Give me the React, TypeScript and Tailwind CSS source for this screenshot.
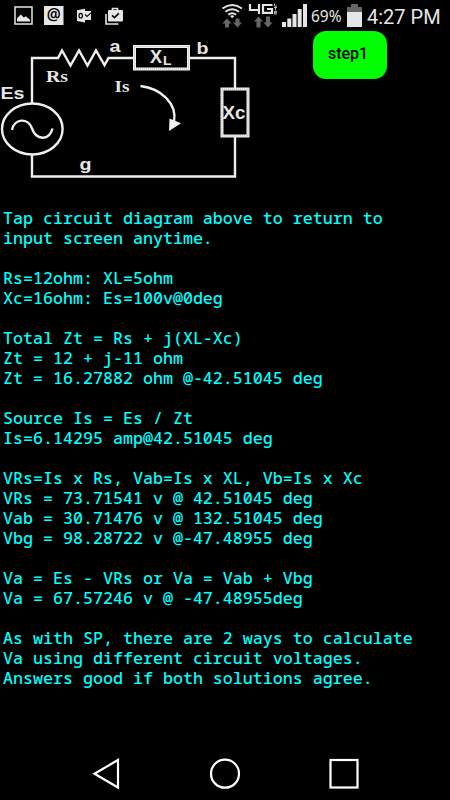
import React from 'react';

const RESULT_LINES = [
  'Tap circuit diagram above to return to',
  'input screen anytime.',
  '',
  'Rs=12ohm: XL=5ohm',
  'Xc=16ohm: Es=100v@0deg',
  '',
  'Total Zt = Rs + j(XL-Xc)',
  'Zt = 12 + j-11 ohm',
  'Zt = 16.27882 ohm @-42.51045 deg',
  '',
  'Source Is = Es / Zt',
  'Is=6.14295 amp@42.51045 deg',
  '',
  'VRs=Is x Rs, Vab=Is x XL, Vb=Is x Xc',
  'VRs = 73.71541 v @ 42.51045 deg',
  'Vab = 30.71476 v @ 132.51045 deg',
  'Vbg = 98.28722 v @-47.48955 deg',
  '',
  'Va = Es - VRs or Va = Vab + Vbg',
  'Va = 67.57246 v @ -47.48955deg',
  '',
  'As with SP, there are 2 ways to calculate',
  'Va using different circuit voltages.',
  'Answers good if both solutions agree.',
];

const NotificationIcons: React.FC = () => (
  <svg width="130" height="32" viewBox="0 0 130 32" className="shrink-0">
    {/* Gallery */}
    <rect x="15" y="7" width="17" height="17" fill="none" stroke="#e6e6e6" strokeWidth="1.5" />
    <path d="M17 21.5V18.500l3.800-4 3 3 2-1.300 4.200 3.500v1.800z" fill="#e6e6e6" />
    {/* Mail */}
    <rect x="44" y="6" width="19.5" height="19" fill="#e6e6e6" />
    <text x="53.800" y="20" textAnchor="middle" fontSize="15.500" fontWeight="600" fontFamily="Noto Sans, sans-serif" fill="#000">@</text>
    {/* Outlook */}
    <path d="M77 10.2l8-1.4v13.7l-8-1.5z" fill="#e6e6e6" />
    <ellipse cx="80.7" cy="15.7" rx="1.7" ry="2.3" fill="none" stroke="#000" strokeWidth="1.2" />
    <rect x="85" y="11" width="6" height="9" fill="#e6e6e6" />
    <path d="M85 14.500l2 2 4-3.700" fill="none" stroke="#000" strokeWidth="1.1" />
    {/* Task bag */}
    <path d="M106 14V24h12.500" fill="none" stroke="#e6e6e6" strokeWidth="1.6" />
    <path d="M112.5 10V8.5h5V10" fill="none" stroke="#e6e6e6" strokeWidth="1.7" />
    <rect x="108" y="10" width="15" height="11.500" rx="1" fill="#e6e6e6" />
    <path d="M112 15.3l2.5 2.3 4.3-4.2" fill="none" stroke="#000" strokeWidth="1.6" />
  </svg>
);

const SignalIcons: React.FC = () => (
  <svg width="90" height="32" viewBox="220 0 90 32" className="shrink-0">
    {/* Wifi */}
    <g fill="none" stroke="#e6e6e6" strokeWidth="2">
      <path d="M222.5 8.5q9.7-7 19.4 0" />
      <path d="M225.4 11.7q6.8-5 13.6 0" />
      <path d="M228.3 14.7q3.9-2.8 7.8 0" />
    </g>
    <path d="M230 16q2.2-1.4 4.4 0l-2.2 2.3z" fill="#e6e6e6" />
    {/* Data arrows */}
    <g fill="#666">
      <path d="M227 18.500l4.600 5H229v4h-4v-4h-2.600z" />
      <path d="M237.500 27.500l-4.600-5h2.600v-4h4v4h2.600z" />
      <path d="M258.500 16.500l4.600 5h-2.600v6h-4v-6h-2.600z" />
      <path d="M268 27.500l-4.600-5h2.600v-6h4v6h2.600z" />
    </g>
    {/* 4G LTE */}
    <path d="M250 4v6h9M259 4v10M272.500 5H263v7.800h9V9H267" fill="none" stroke="#e6e6e6" strokeWidth="2.200" />
    <path d="M274.500 3.500v2.600h2.500M274 7.500h3M275.500 7.500v2.700M277 11.300h-2.500v2.700h2.500M274.500 12.600h2.500" fill="none" stroke="#ccc" strokeWidth="0.900" />
    {/* Signal strength */}
    <path d="M282 22h4v5h-4zM287.300 18.500h4V27h-4zM292.500 14h4v13h-4zM297.700 9h4v18h-4zM303 4h4v23h-4z" fill="#e6e6e6" />
  </svg>
);

const StatusBar: React.FC = () => (
  <header className="flex h-8 shrink-0 items-center font-[Roboto,sans-serif] text-[#e6e6e6]">
    <NotificationIcons />
    <div className="w-[90px] shrink-0" />
    <SignalIcons />
    <span className="ml-px w-9 whitespace-nowrap font-['Noto_Sans',sans-serif] text-[15.500px] leading-8">69%</span>
    <svg width="15" height="32" viewBox="0 0 15 32" className="shrink-0">
      <path d="M4 4h7v3h4v5H0V7h4z" fill="#666" />
      <path d="M0 12h15v15H0z" fill="#e6e6e6" />
    </svg>
    <span className="ml-[5px] mt-px whitespace-nowrap text-xl leading-8">4:27 PM</span>
  </header>
);

const CircuitDiagram: React.FC = () => (
  <svg width="260" height="160" viewBox="0 32 260 160" className="shrink-0">
    <g fill="none" stroke="#f0f0f0" strokeWidth="2.400">
      <path d="M32 104V58h26l4-7.500 8.500 15 8.500-15 8.500 15 8.500-15 8.500 14.500 4-7H134" />
      <path d="M189 58h46v30M235 137v39.500H32V154" />
      <ellipse cx="32.300" cy="129" rx="30.300" ry="25.500" />
      <path d="M12 130c2-11.500 16-13 20-1.500s17 13 20.500 0" />
      <path d="M140.500 86c20 2.500 37 17 33.500 36" />
    </g>
    {/* Component boxes have a beaded outline */}
    <g fill="none" stroke="#f0f0f0" strokeWidth="3">
      <rect x="134.500" y="46.500" width="54" height="22.500" />
      <rect x="222" y="89" width="26" height="47" />
    </g>
    <g fill="none" stroke="#aaa" strokeWidth="0.800" strokeDasharray="1 1">
      <rect x="134.500" y="46.500" width="54" height="22.500" />
      <rect x="222" y="89" width="26" height="47" />
    </g>
    <path d="M169.500 118.500l11.500 4.800-12 7.700z" fill="#f0f0f0" />
    <g fill="#e6e6e6" fontFamily="Liberation Sans, sans-serif" fontWeight="700" fontSize="16">
      <text x="109.500" y="51.500" fontSize="17" textLength="11" lengthAdjust="spacingAndGlyphs">a</text>
      <text x="196.500" y="54" textLength="12" lengthAdjust="spacingAndGlyphs">b</text>
      <text x="0.500" y="98.500" textLength="24" lengthAdjust="spacingAndGlyphs">Es</text>
      <text x="79.500" y="170" fontSize="17" textLength="12" lengthAdjust="spacingAndGlyphs">g</text>
      <text x="150" y="62.500" fontSize="18">X</text>
      <text x="163" y="65" fontSize="12" textLength="8.500" lengthAdjust="spacingAndGlyphs">L</text>
      <text x="222.500" y="119" fontSize="18" textLength="23" lengthAdjust="spacingAndGlyphs">Xc</text>
    </g>
    <g fill="#e6e6e6" fontFamily="Liberation Serif, serif" fontWeight="700" fontSize="17">
      <text x="46" y="81.500" textLength="22" lengthAdjust="spacingAndGlyphs">Rs</text>
      <text x="114.500" y="91.500" textLength="15" lengthAdjust="spacingAndGlyphs">Is</text>
    </g>
  </svg>
);

const NavigationBar: React.FC = () => (
  <nav className="flex h-[52px] shrink-0 items-center justify-center">
    <svg width="270" height="52" viewBox="90 748 270 52" fill="none" stroke="#fff" strokeWidth="2.200">
      <path d="M94.500 773.700L118 760v27.500z" />
      <circle cx="225" cy="773.700" r="14" />
      <rect x="330.500" y="760" width="27" height="27.500" />
    </svg>
  </nav>
);

const App: React.FC = () => {
  return (
    <div className="flex h-[800px] w-[450px] flex-col overflow-hidden bg-black">
      <StatusBar />
      <main className="flex grow flex-col">
        <div className="flex h-44 items-start">
          <CircuitDiagram />
          <button className="-mt-px ml-[53px] h-12 w-[74px] rounded-[13px] bg-[#00ff00] pb-[3px] pr-1 font-[Roboto,sans-serif] text-base font-medium text-black">
            step1
          </button>
        </div>
        <div className="whitespace-pre pl-[3px] font-['Noto_Sans_Mono','DejaVu_Sans_Mono',monospace] text-[16.670px] font-medium leading-5 text-[#00ffff]">
          {RESULT_LINES.map((line, i) => (
            <p key={i} className="h-5">{line}</p>
          ))}
        </div>
      </main>
      <NavigationBar />
    </div>
  );
};

export default App;
